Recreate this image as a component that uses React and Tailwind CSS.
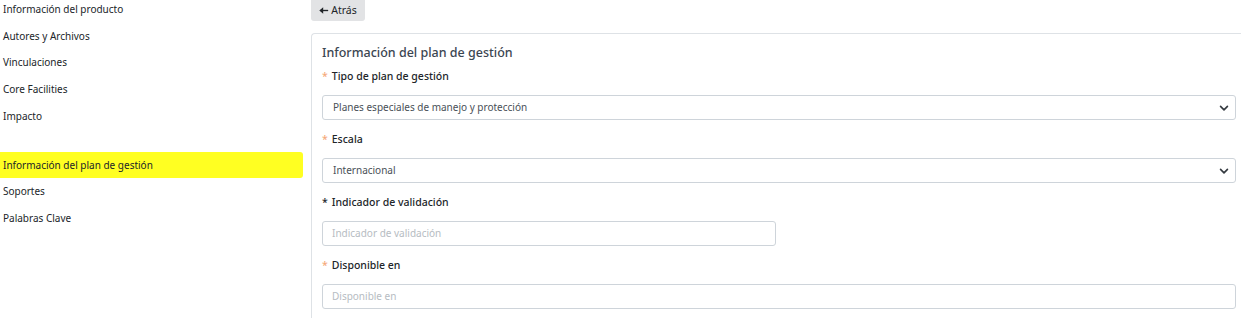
import React from "react";

const menu = [
  "Información del producto",
  "Autores y Archivos",
  "Vinculaciones",
  "Core Facilities",
  "Impacto",
];

const menu2 = ["Soportes", "Palabras Clave"];

function Chevron() {
  return (
    <svg width="10" height="10" viewBox="0 0 16 16" className="text-[#343a40]">
      <path d="M2.5 5.5l5.5 5.5 5.5-5.5" fill="none" stroke="currentColor" strokeWidth="2.6" strokeLinecap="round" strokeLinejoin="round" />
    </svg>
  );
}

function ArrowLeft() {
  return (
    <svg width="10" height="9" viewBox="0 0 12 10" className="text-[#212529]">
      <path d="M1 5h10" stroke="currentColor" strokeWidth="1.6" />
      <path d="M0.5 5l4.5-4v8z" fill="currentColor" />
    </svg>
  );
}

function Label({ children, star = "orange" }) {
  return (
    <div className="flex items-center h-[20px] text-[10.5px] text-[#212529] font-medium">
      <span className={star === "orange" ? "text-[#f5a97a] mr-[4px]" : "text-[#212529] mr-[4px]"}>*</span>
      {children}
    </div>
  );
}

function Select({ value }) {
  return (
    <div className="h-[25px] border border-[#ced4da] rounded-[3px] flex items-center justify-between pl-[10px] pr-[6px] text-[10px] text-[#495057] bg-white">
      <span>{value}</span>
      <Chevron />
    </div>
  );
}

function Input({ placeholder, className = "" }) {
  return (
    <div className={"h-[25px] border border-[#ced4da] rounded-[3px] flex items-center pl-[9px] text-[10px] text-[#b6bcc2] bg-white " + className}>
      {placeholder}
    </div>
  );
}

export default function App() {
  return (
    <div className="w-[1241px] h-[318px] overflow-hidden bg-white flex" style={{ fontFamily: '"Noto Sans", "Open Sans", sans-serif' }}>
      <div className="w-[303px] shrink-0 text-[10px] text-[#212529] -mt-[4px]">
        {menu.map((m) => (
          <div key={m} className="h-[26.7px] flex items-center pl-[3px]">{m}</div>
        ))}
        <div className="h-[23px]" />
        <div className="h-[26px] flex items-center pl-[3px] bg-[#ffff22] rounded-r-[3px]">Información del plan de gestión</div>
        {menu2.map((m) => (
          <div key={m} className="h-[26.5px] flex items-center pl-[3px]">{m}</div>
        ))}
      </div>
      <div className="ml-[8px] flex-1 flex flex-col">
        <div className="w-[54px] h-[21px] bg-[#e2e3e5] rounded-b-[3px] flex items-center justify-center text-[10.5px] text-[#212529] gap-[2px]">
          <ArrowLeft />
          <span>Atrás</span>
        </div>
        <div className="mt-[12px] border border-[#dee2e6] rounded-tl-[4px] border-r-0 border-b-0 flex-1 pl-[10px] pr-[5px] pt-[9px]">
          <div className="text-[12.5px] text-[#3b4651] font-medium h-[20px] flex items-center">Información del plan de gestión</div>
          <div className="mt-[4px]"><Label>Tipo de plan de gestión</Label></div>
          <div className="mt-[8px]"><Select value="Planes especiales de manejo y protección" /></div>
          <div className="mt-[10px]"><Label>Escala</Label></div>
          <div className="mt-[8px]"><Select value="Internacional" /></div>
          <div className="mt-[10px]"><Label star="black">Indicador de validación</Label></div>
          <div className="mt-[8px]"><Input placeholder="Indicador de validación" className="w-[454px]" /></div>
          <div className="mt-[10px]"><Label>Disponible en</Label></div>
          <div className="mt-[8px]"><Input placeholder="Disponible en" /></div>
        </div>
      </div>
    </div>
  );
}
